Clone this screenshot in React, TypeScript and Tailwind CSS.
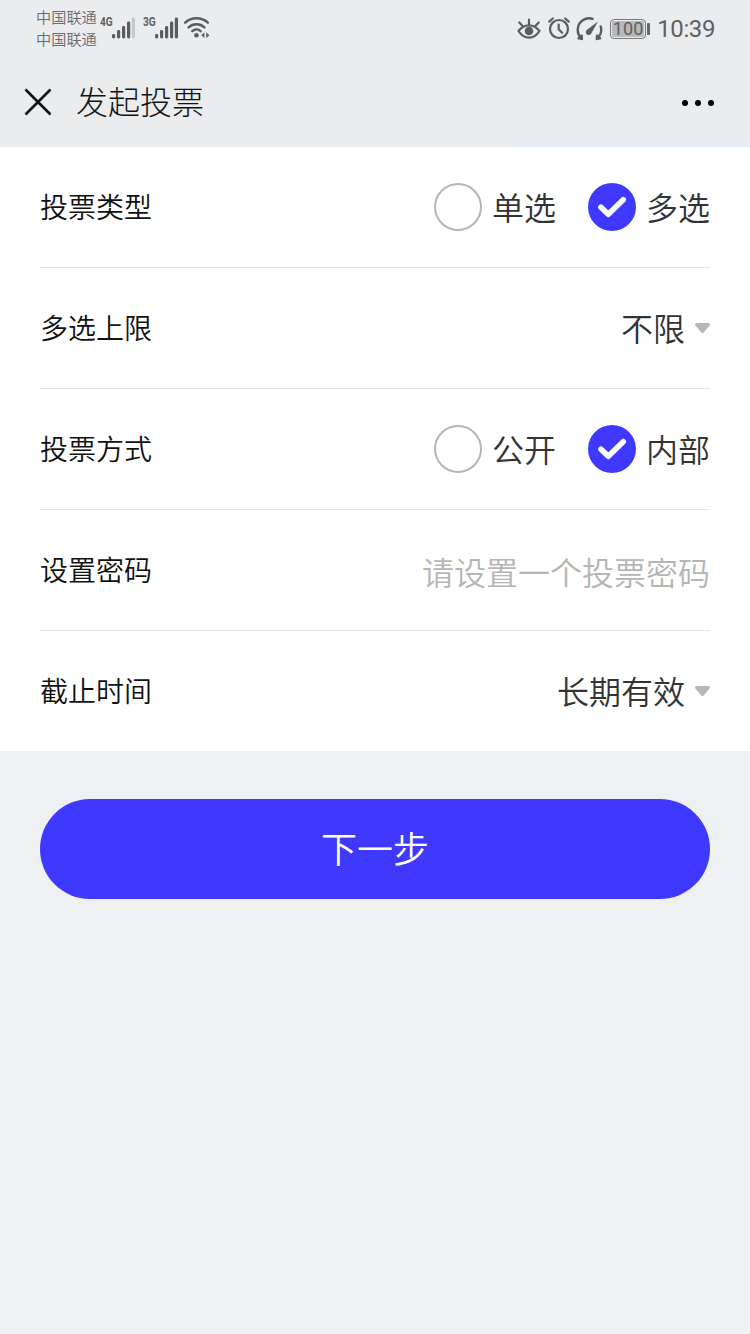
import { useState } from "react";
import type { ReactNode } from "react";

const typeOptions = ["单选", "多选"];
const modeOptions = ["公开", "内部"];

function SignalBars({ weak = false }: { weak?: boolean }) {
  return (
    <svg width="24" height="22" viewBox="0 0 24 22" fill="#5b5c5f">
      <rect x="0" y="17" width="3.2" height="4.5" rx="1.4" />
      <rect x="5" y="13" width="3.2" height="8.5" rx="1.4" />
      <rect x="10" y="9" width="3.2" height="12.5" rx="1.4" />
      <rect x="15" y="4.5" width="3.2" height="17" rx="1.4" />
      <rect x="19.8" y="0.5" width="3.2" height="21" rx="1.4" fill={weak ? "#c6c7c9" : "#5b5c5f"} />
    </svg>
  );
}

function WifiIcon() {
  return (
    <svg width="27" height="22" viewBox="0 0 27 22" fill="none" stroke="#5b5c5f" strokeWidth="2.5" strokeLinecap="round">
      <path d="M1.2 6.6a17 17 0 0 1 22.600 0" />
      <path d="M4.600 11.300a11.500 11.500 0 0 1 15.800 0" />
      <path d="M8.300 15.200a6.200 6.200 0 0 1 8.300-.1" />
      <circle cx="12.400" cy="19.300" r="2.300" fill="#5b5c5f" stroke="none" />
      <path d="M20.400 16.300v5.700l-3.200-2.800zM22.200 16.300v5.700l3.200-2.800z" fill="#5b5c5f" stroke="none" />
    </svg>
  );
}

function EyeIcon() {
  return (
    <svg width="24" height="22" viewBox="0 0 24 22" fill="none" stroke="#5b5c5f" strokeWidth="2.200" strokeLinecap="round">
      <path d="M1.500 13c2.800-3.700 6.300-5.600 10.500-5.600s7.700 1.900 10.500 5.600c-2.800 4.400-6.300 6.600-10.500 6.600s-7.700-2.200-10.500-6.600z" strokeLinejoin="round" />
      <path d="M12 7V1.700M5.400 7.800 2.300 4.500M18.600 7.800l3.100-3.300" />
      <circle cx="12" cy="13" r="4.300" fill="#5b5c5f" stroke="none" />
    </svg>
  );
}

function AlarmIcon() {
  return (
    <svg width="22" height="23" viewBox="0 0 22 23" fill="none" stroke="#5b5c5f" strokeWidth="2.200" strokeLinecap="round">
      <circle cx="11" cy="12" r="9" />
      <path d="M10.700 7.500v4.700l3.400 3.600M1.200 4.600l3.600-3.100M20.800 4.600l-3.600-3.100" strokeLinejoin="round" />
    </svg>
  );
}

function GaugeIcon() {
  return (
    <svg width="27" height="24" viewBox="0 0 27 24" fill="none" stroke="#5b5c5f" strokeWidth="2.400" strokeLinecap="round">
      <path d="M2.600 21.300l3.200.5-.1-3M5.200 21A11.300 11.300 0 0 1 1.900 11 11.300 11.300 0 0 1 16.600 1.800" />
      <path d="M24.100 21.300l-3.200.5.1-3M21.500 21A11.300 11.300 0 0 0 24.700 9.500" />
      <path d="M22 4.500 15.500 16a2.900 2.900 0 1 1-4.500-3.200z" fill="#5b5c5f" stroke="none" />
    </svg>
  );
}

function StatusBar() {
  return (
    <div className="flex h-[58px] items-start justify-between pr-[35px] pl-9 text-[#5f6063]">
      <div className="flex items-start">
        <div className="pt-[5px] text-[15.200px] leading-[22px] text-[#6a6b6e]">
          <p>中国联通</p>
          <p>中国联通</p>
        </div>
        <div className="flex pt-[17px] pl-[3px]">
          <span className="w-3 origin-left scale-x-[0.780] font-[Roboto] text-[13px] leading-[10px] font-bold">4G</span>
          <SignalBars weak />
        </div>
        <div className="flex pt-[17px] pl-[7px]">
          <span className="w-3 origin-left scale-x-[0.780] font-[Roboto] text-[13px] leading-[10px] font-bold">3G</span>
          <SignalBars />
        </div>
        <div className="pt-[16px] pl-[5px]">
          <WifiIcon />
        </div>
      </div>
      <div className="flex h-[57px] items-center">
        <EyeIcon />
        <span className="ml-[7px]">
          <AlarmIcon />
        </span>
        <span className="ml-[6px]">
          <GaugeIcon />
        </span>
        <div className="ml-[7px] flex h-5 w-9 items-center justify-center rounded-[4px] border border-[#77787a] p-px">
          <span className="flex h-full w-full items-center justify-center rounded-[2px] bg-[#b7b8ba] font-[Roboto] text-[18px] leading-none font-normal tracking-[0.200px]">
            100
          </span>
        </div>
        <div className="ml-px h-3 w-[3px] rounded-[1px] bg-[#66676a]" />
        <span className="ml-[7px] font-[Roboto] text-[24px] leading-none font-normal tracking-[-0.400px]">10:39</span>
      </div>
    </div>
  );
}

function TitleBar() {
  return (
    <header className="relative flex h-[89px] items-center justify-between pr-9 pl-6">
      <div className="flex items-center">
        <svg className="-mt-px" width="28" height="28" viewBox="0 0 28 28" stroke="#111214" strokeWidth="2.600">
          <path d="M1.500 1.500l25 25M26.500 1.500l-25 25" />
        </svg>
        <h1 className="ml-6 pb-1.5 text-[32px] leading-[44px] font-light text-[#111214]">发起投票</h1>
      </div>
      <div className="flex gap-[7px]">
        <span className="h-1.5 w-1.5 rounded-full bg-black" />
        <span className="h-1.5 w-1.5 rounded-full bg-black" />
        <span className="h-1.5 w-1.5 rounded-full bg-black" />
      </div>
      <span className="absolute right-0 bottom-0 h-px w-60 bg-[#dfeafa]" />
    </header>
  );
}

function FormRow({ label, children }: { label: string; children: ReactNode }) {
  return (
    <div className="mx-10 flex h-[121px] items-center justify-between border-b border-[#e4e5e6] last:h-[120px] last:border-b-0">
      <span className="pb-0.5 text-[28px] leading-10 text-[#111]">{label}</span>
      {children}
    </div>
  );
}

function RadioGroup({
  options,
  value,
  onChange,
}: {
  options: string[];
  value: string;
  onChange: (value: string) => void;
}) {
  return (
    <div className="flex gap-8">
      {options.map((option) => (
        <button key={option} className="flex items-center gap-2.5" onClick={() => onChange(option)}>
          {option === value ? (
            <span className="flex h-12 w-12 items-center justify-center rounded-full bg-[#3f39ff]">
              <svg width="30" height="22" viewBox="0 0 30 22" fill="none" stroke="#fff" strokeWidth="5.600" strokeLinecap="round" strokeLinejoin="round">
                <path d="M4 11.200l7.300 7L26.200 3.800" />
              </svg>
            </span>
          ) : (
            <span className="h-12 w-12 rounded-full border-2 border-[#b5b5b6]" />
          )}
          <span className="pb-0.5 text-[32px] leading-[46px] text-[#333]">{option}</span>
        </button>
      ))}
    </div>
  );
}

function SelectValue({ value }: { value: string }) {
  return (
    <button className="flex items-center gap-2.5 text-[32px] leading-[46px] text-[#333]">
      <span className="pb-0.5">{value}</span>
      <svg width="15" height="10" viewBox="0 0 15 10" fill="#b5b5b6">
        <path d="M1.800 0h11.400c1.600 0 2.300 1.600 1.200 2.800L8.900 9.300c-.8.900-2 .9-2.800 0L.6 2.800C-.5 1.600.2 0 1.800 0z" />
      </svg>
    </button>
  );
}

export default function App() {
  const [voteType, setVoteType] = useState("多选");
  const [voteMode, setVoteMode] = useState("内部");

  return (
    <main className="min-h-screen bg-[#eff0f2] font-['Noto_Sans_CJK_SC',sans-serif] font-[350]">
      <div className="bg-[#ebecee]">
        <StatusBar />
        <TitleBar />
      </div>

      <section className="bg-white">
        <FormRow label="投票类型">
          <RadioGroup options={typeOptions} value={voteType} onChange={setVoteType} />
        </FormRow>
        <FormRow label="多选上限">
          <SelectValue value="不限" />
        </FormRow>
        <FormRow label="投票方式">
          <RadioGroup options={modeOptions} value={voteMode} onChange={setVoteMode} />
        </FormRow>
        <FormRow label="设置密码">
          <input
            className="h-12 w-[400px] pt-0.5 text-right text-[32px] text-[#333] outline-none placeholder:text-[#b5b5b6]"
            placeholder="请设置一个投票密码"
          />
        </FormRow>
        <FormRow label="截止时间">
          <SelectValue value="长期有效" />
        </FormRow>
      </section>

      <div className="px-10 pt-12">
        <button className="h-[100px] w-full rounded-full bg-[#3f39ff] pb-1 text-[36px] text-white">下一步</button>
      </div>
    </main>
  );
}
